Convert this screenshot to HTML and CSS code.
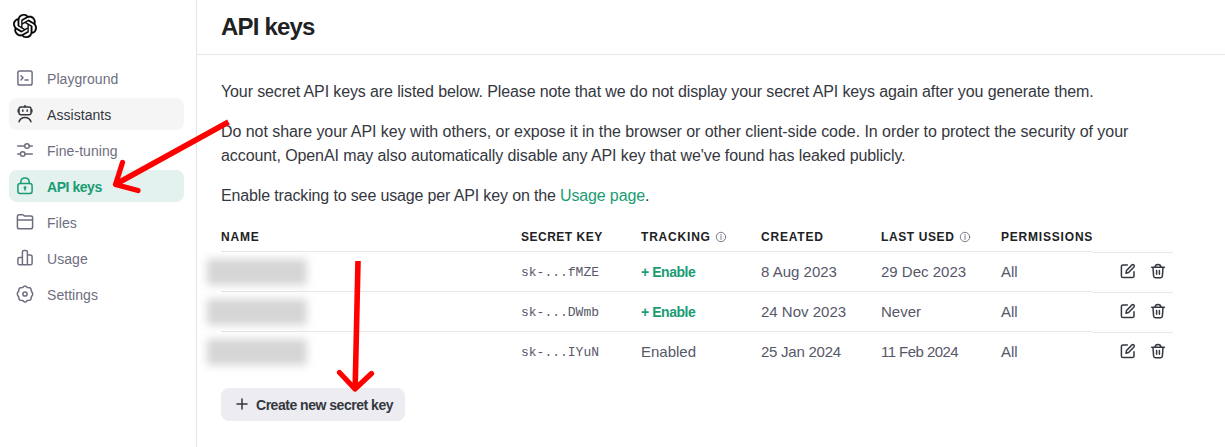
FILE: index.html
```html
<!DOCTYPE html>
<html lang="en">
<head>
<meta charset="utf-8">
<title>API keys</title>
<link rel="stylesheet" href="styles.css">
</head>
<body>
<svg class="defs" aria-hidden="true">
  <symbol id="edit" viewBox="0 0 16 16"><path d="M7.3 2H3Q1.4 2 1.4 3.6V12.9Q1.4 14.5 3 14.5H12.4Q14 14.5 14 12.9V8.8"/><path d="M6 10.2L6.5 7.5L12 1.9Q12.9 1.1 13.9 2Q14.8 3 14 3.9L8.6 9.5Z"/></symbol>
  <symbol id="trash" viewBox="0 0 16 16"><path d="M1.6 4.3H14.4M5 4.1Q5.3 1.4 8 1.4T11 4.1M3 4.5L3.6 13Q3.7 14.7 5.3 14.7H10.7Q12.3 14.7 12.4 13L13 4.5M6.6 7.4V11.2M9.4 7.4V11.2"/></symbol>
  <symbol id="info" viewBox="0 0 12 12"><circle cx="6" cy="6" r="4.7"/><path d="M6 5.4V8.5M6 3.4V4.3"/></symbol>
</svg>
<div class="app">
  <aside class="sidebar">
    <svg class="logo" viewBox="0 0 24 24"><path d="M22.2819 9.8211a5.9847 5.9847 0 0 0-.5157-4.9108 6.0462 6.0462 0 0 0-6.5098-2.9A6.0651 6.0651 0 0 0 4.9807 4.1818a5.9847 5.9847 0 0 0-3.9977 2.9 6.0462 6.0462 0 0 0 .7427 7.0966 5.98 5.98 0 0 0 .511 4.9107 6.051 6.051 0 0 0 6.5146 2.9001A5.9847 5.9847 0 0 0 13.2599 24a6.0557 6.0557 0 0 0 5.7718-4.2058 5.9894 5.9894 0 0 0 3.9977-2.9001 6.0557 6.0557 0 0 0-.7475-7.0729zm-9.022 12.6081a4.4755 4.4755 0 0 1-2.8764-1.0408l.1419-.0804 4.7783-2.7582a.7948.7948 0 0 0 .3927-.6813v-6.7369l2.02 1.1686a.071.071 0 0 1 .038.052v5.5826a4.504 4.504 0 0 1-4.4945 4.4944zm-9.6607-4.1254a4.4708 4.4708 0 0 1-.5346-3.0137l.142.0852 4.783 2.7582a.7712.7712 0 0 0 .7806 0l5.8428-3.3685v2.3324a.0804.0804 0 0 1-.0332.0615L9.74 19.9502a4.4992 4.4992 0 0 1-6.1408-1.6464zM2.3408 7.8956a4.485 4.485 0 0 1 2.3655-1.9728V11.6a.7664.7664 0 0 0 .3879.6765l5.8144 3.3543-2.0201 1.1685a.0757.0757 0 0 1-.071 0l-4.8303-2.7865A4.504 4.504 0 0 1 2.3408 7.872zm16.5963 3.8558L13.1038 8.364 15.1192 7.2a.0757.0757 0 0 1 .071 0l4.8303 2.7913a4.4944 4.4944 0 0 1-.6765 8.1042v-5.6772a.79.79 0 0 0-.407-.667zm2.0107-3.0231l-.142-.0852-4.7735-2.7818a.7759.7759 0 0 0-.7854 0L9.409 9.2297V6.8974a.0662.0662 0 0 1 .0284-.0615l4.8303-2.7866a4.4992 4.4992 0 0 1 6.6802 4.66zM8.3065 12.863l-2.02-1.1638a.0804.0804 0 0 1-.038-.0567V6.0742a4.4992 4.4992 0 0 1 7.3757-3.4537l-.142.0805L8.704 5.459a.7948.7948 0 0 0-.3927.6813zm1.0976-2.3654l2.602-1.4998 2.6069 1.4998v2.9994l-2.5974 1.4997-2.6067-1.4997Z"/></svg>
    <nav class="nav">
      <a class="nav-item"><svg class="icon" viewBox="0 0 18 18"><rect x="1.9" y="1.9" width="14.2" height="14.2" rx="1.8"/><path d="M5 6.7L7 8.8L5 10.9M9 11H12.2"/></svg><span>Playground</span></a>
      <a class="nav-item hovered"><svg class="icon" viewBox="0 0 18 18"><path d="M9 .4V1.8"/><rect x="3" y="1.9" width="12" height="7.8" rx="2"/><path d="M2.2 4.8V7M15.8 4.8V7M3 16.8Q4.4 12.5 9 12.5T15 16.8M6.8 5V6.2M11.2 5V6.2"/></svg><span>Assistants</span></a>
      <a class="nav-item"><svg class="icon" viewBox="0 0 18 18"><path d="M1.7 5H8.5M13.5 5H16.3M1.7 13H4.2M9.2 13H16.3"/><circle cx="11" cy="5" r="2.3"/><circle cx="6.7" cy="13" r="2.3"/></svg><span>Fine-tuning</span></a>
      <a class="nav-item active"><svg class="icon" viewBox="0 0 18 18"><rect x="1.9" y="6.6" width="14.2" height="9.8" rx="2.2"/><path d="M4.8 6.3V5.2Q4.8 1 9 1T13.2 5.2V6.3M9 11.2V13"/><circle cx="9" cy="10.6" r=".7"/></svg><span>API keys</span></a>
      <a class="nav-item"><svg class="icon" viewBox="0 0 18 18"><path d="M1.4 14V3.4Q1.4 1.8 3 1.8H6.5Q7.7 1.8 8.5 3.1H14.8Q16.6 3.1 16.6 4.8V14Q16.6 15.8 14.8 15.8H3.2Q1.4 15.8 1.4 14ZM1.6 7H16.4"/></svg><span>Files</span></a>
      <a class="nav-item"><svg class="icon" viewBox="0 0 18 18"><path d="M6.4 15.8V3Q6.4 1.4 8 1.4H9.8Q11.4 1.4 11.4 3V15.8M6.4 8.5H3.5Q1.9 8.5 1.9 10V14.2Q1.9 15.8 3.5 15.8H14.5Q16.1 15.8 16.1 14.2V7.6Q16.1 6 14.5 6H11.4"/></svg><span>Usage</span></a>
      <a class="nav-item"><svg class="icon" viewBox="0 0 18 18"><path d="M6.6 2.6L8 1.3Q9 .5 10 1.3L11.4 2.6L13.4 2.7Q14.7 2.8 15 4L15.3 6L16.4 7.8Q17 9 16.4 10.2L15.3 12L15 14Q14.7 15.2 13.4 15.3L11.4 15.4L10 16.7Q9 17.5 8 16.7L6.6 15.4L4.6 15.3Q3.3 15.2 3 14L2.7 12L1.6 10.2Q1 9 1.6 7.8L2.7 6L3 4Q3.3 2.8 4.6 2.7Z"/><circle cx="9" cy="9" r="2.1"/></svg><span>Settings</span></a>
    </nav>
  </aside>
  <main class="main">
    <header class="header"><h1>API keys</h1></header>
    <section class="content">
      <p><span class="line l1">Your secret API keys are listed below. Please note that we do not display your secret API keys again after you generate them.</span></p>
      <p><span class="line l2">Do not share your API key with others, or expose it in the browser or other client-side code. In order to protect the security of your</span> <span class="line l3">account, OpenAI may also automatically disable any API key that we've found has leaked publicly.</span></p>
      <p><span class="line l4">Enable tracking to see usage per API key on the <a class="link">Usage page</a>.</span></p>
      <div class="table">
        <div class="row head"><b>NAME</b><b class="secret">SECRET KEY</b><b>TRACKING<svg class="info"><use href="#info"/></svg></b><b>CREATED</b><b class="used">LAST USED<svg class="info"><use href="#info"/></svg></b><b>PERMISSIONS</b></div>
        <div class="row"><span><i class="redacted"></i></span><span class="key">sk-...fMZE</span><span class="enable">+ Enable</span><span>8 Aug 2023</span><span>29 Dec 2023</span><span>All</span><span class="actions"><svg><use href="#edit"/></svg><svg><use href="#trash"/></svg></span></div>
        <div class="row"><span><i class="redacted"></i></span><span class="key">sk-...DWmb</span><span class="enable">+ Enable</span><span>24 Nov 2023</span><span>Never</span><span>All</span><span class="actions"><svg><use href="#edit"/></svg><svg><use href="#trash"/></svg></span></div>
        <div class="row"><span><i class="redacted"></i></span><span class="key">sk-...IYuN</span><span>Enabled</span><span class="tight">25 Jan 2024</span><span class="tighter">11 Feb 2024</span><span>All</span><span class="actions"><svg><use href="#edit"/></svg><svg><use href="#trash"/></svg></span></div>
      </div>
      <button class="create"><svg viewBox="0 0 12 12"><path d="M6 1V11M1 6H11"/></svg><span>Create new secret key</span></button>
    </section>
  </main>
</div>
<svg class="arrows" viewBox="0 0 1225 447"><path class="shaft" d="M228.5 122L116 184M358 261L355.2 387"/><path d="M122.5 162.5L115.5 184.5L138 190.5M339.5 372.5L355 389L371.5 373.5"/></svg>
</body>
</html>
```
FILE: styles.css
```css
* { box-sizing: border-box; }
body { margin: 0; overflow: hidden; background: #fff; color: #353740; font-family: "Liberation Sans", Arial, sans-serif; }
svg { fill: none; stroke: currentColor; stroke-width: 1.5; stroke-linecap: round; stroke-linejoin: round; flex: none; }
.defs { display: none; }
.app { display: flex; height: 447px; }
.sidebar { width: 197px; border-right: 1px solid #e3e3ea; padding: 14px 12px 0 9px; }
.logo { display: block; width: 24px; height: 24px; margin-left: 4px; fill: #000; stroke: #000; stroke-width: .25; }
.nav { display: flex; flex-direction: column; gap: 4px; margin-top: 24px; }
.nav-item { display: flex; align-items: center; gap: 13px; height: 32px; padding: 2px 7px 0; border-radius: 8px; font-size: 14px; letter-spacing: .05px; color: #6e6e80; }
.icon { width: 18px; height: 18px; margin-top: -2px; }
.hovered { background: #f5f5f5; color: #353740; }
.active { background: #e3f1ef; color: #1a9c74; font-weight: 700; letter-spacing: -.45px; }
.main { flex: 1; }
.header { height: 55px; border-bottom: 1px solid #e7e7ec; padding: 13px 24px; }
h1 { margin: 0; font-size: 24px; line-height: 28px; color: #202123; letter-spacing: -.8px; }
.content { padding: 25px 24px 0; }
p { margin: 0 0 16px; font-size: 16px; line-height: 24px; }
.line { display: block; white-space: nowrap; }
.l1 { letter-spacing: -.115px; }
.l2 { letter-spacing: -.052px; }
.l3 { letter-spacing: -.088px; }
.l4 { letter-spacing: -.145px; }
.link { color: #1a9c74; }
.table { width: 952px; margin-top: -2px; }
.row { display: grid; grid-template-columns: 300px 120px 120px 120px 120px 92px 80px; height: 40px; font-size: 15px; line-height: 40px; color: #565869; }
.row > span { border-top: 1px solid #e7e7ec; }
.head { height: 29px; font-size: 12px; line-height: 30px; color: #202123; white-space: nowrap; }
.head b { display: flex; align-items: center; gap: 4px; letter-spacing: .8px; }
.head .secret { letter-spacing: .5px; }
.head .used { gap: 5px; letter-spacing: .6px; }
.info { width: 12px; height: 12px; margin-top: -1px; color: #6e6e80; stroke-width: .9; }
.redacted { display: block; width: 100px; height: 26px; margin: 7px 0 0 -14px; background: #d5d5d5; filter: blur(4px); }
.tight { letter-spacing: -.25px; }
.tighter { letter-spacing: -.55px; }
.row .key { font-family: "Liberation Mono", monospace; font-size: 13px; line-height: 42px; }
.row .enable { color: #1a9c74; font-size: 14px; font-weight: 700; letter-spacing: -.45px; }
.row .actions { display: flex; gap: 14px; margin-top: 1px; height: 40px; padding: 10px 0 0 27px; color: #353740; }
.actions svg { width: 16px; height: 16px; }
.create { display: flex; align-items: center; gap: 8px; width: 184px; height: 33px; margin-top: 17px; padding: 1px 15px 0; border: 0; border-radius: 8px; background: #ececf1; color: #353740; font: 700 14px "Liberation Sans", sans-serif; letter-spacing: -.48px; white-space: nowrap; }
.create svg { width: 12px; height: 12px; margin-top: -2px; }
.arrows { position: absolute; left: 0; top: 0; width: 1225px; height: 447px; color: #f00; stroke-width: 5.2; pointer-events: none; }
.shaft { stroke-linecap: butt; stroke-width: 5.6; }
```
